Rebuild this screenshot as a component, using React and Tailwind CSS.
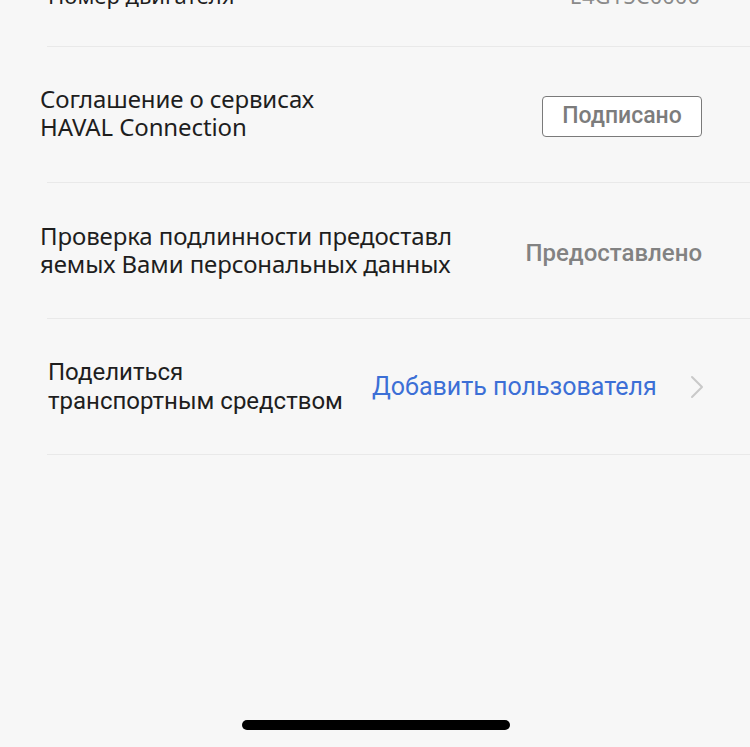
import React from "react";

function Divider() {
  return <div className="ml-[47px] h-px bg-[#e9e9e9]" />;
}

export default function App() {
  return (
    <div className="relative w-[750px] h-[747px] overflow-hidden bg-[#f7f7f7] text-[#1e1e1e]" style={{ fontFamily: '"Noto Sans", Roboto, sans-serif' }}>
      <div className="flex items-center justify-between pl-[48px] pr-[50px] h-[24px] -mt-[17px] text-[22px] leading-[24px]">
        <span>Номер двигателя</span>
        <span className="text-[#8a8a8a]">E4G15C0000</span>
      </div>
      <div className="h-[39px]" />
      <Divider />
      <div className="flex items-center justify-between h-[135px] pl-[40px] pr-[48px]">
        <div className="text-[24px] leading-[28px] tracking-[-0.1px] mt-[-3px]">
          <div>Соглашение о сервисах</div>
          <div>HAVAL Connection</div>
        </div>
        <div className="w-[160px] h-[41px] mt-[3px] rounded-[4px] border border-[#7a7a7a] bg-white flex items-center justify-center text-[23px] font-medium text-[#7c7c7c]" style={{ fontFamily: 'Roboto, "Noto Sans", sans-serif' }}>
          Подписано
        </div>
      </div>
      <Divider />
      <div className="flex items-center justify-between h-[135px] pl-[40px] pr-[48px]">
        <div className="text-[24px] leading-[28px] tracking-[-0.1px] mt-[-2px]">
          <div>Проверка подлинности предоставл</div>
          <div>яемых Вами персональных данных</div>
        </div>
        <div className="text-[24px] font-medium text-[#828282] mt-[5px]" style={{ fontFamily: 'Roboto, "Noto Sans", sans-serif' }}>
          Предоставлено
        </div>
      </div>
      <Divider />
      <div className="flex items-center h-[135px] pl-[48px] pr-[46px]" style={{ fontFamily: 'Roboto, "Noto Sans", sans-serif' }}>
        <div className="text-[24px] leading-[29px] w-[324px]">
          <div>Поделиться</div>
          <div>транспортным средством</div>
        </div>
        <div className="text-[25px] text-[#3c6fd6]">Добавить пользователя</div>
        <div className="flex-1" />
        <svg width="14" height="24" viewBox="0 0 14 24" className="mt-[1px]">
          <path d="M2 2 L12 12 L2 22" fill="none" stroke="#c9c9c9" strokeWidth="2" strokeLinecap="round" strokeLinejoin="round" />
        </svg>
      </div>
      <Divider />
      <div className="absolute left-[242px] top-[720px] w-[268px] h-[10px] rounded-full bg-black" />
    </div>
  );
}
